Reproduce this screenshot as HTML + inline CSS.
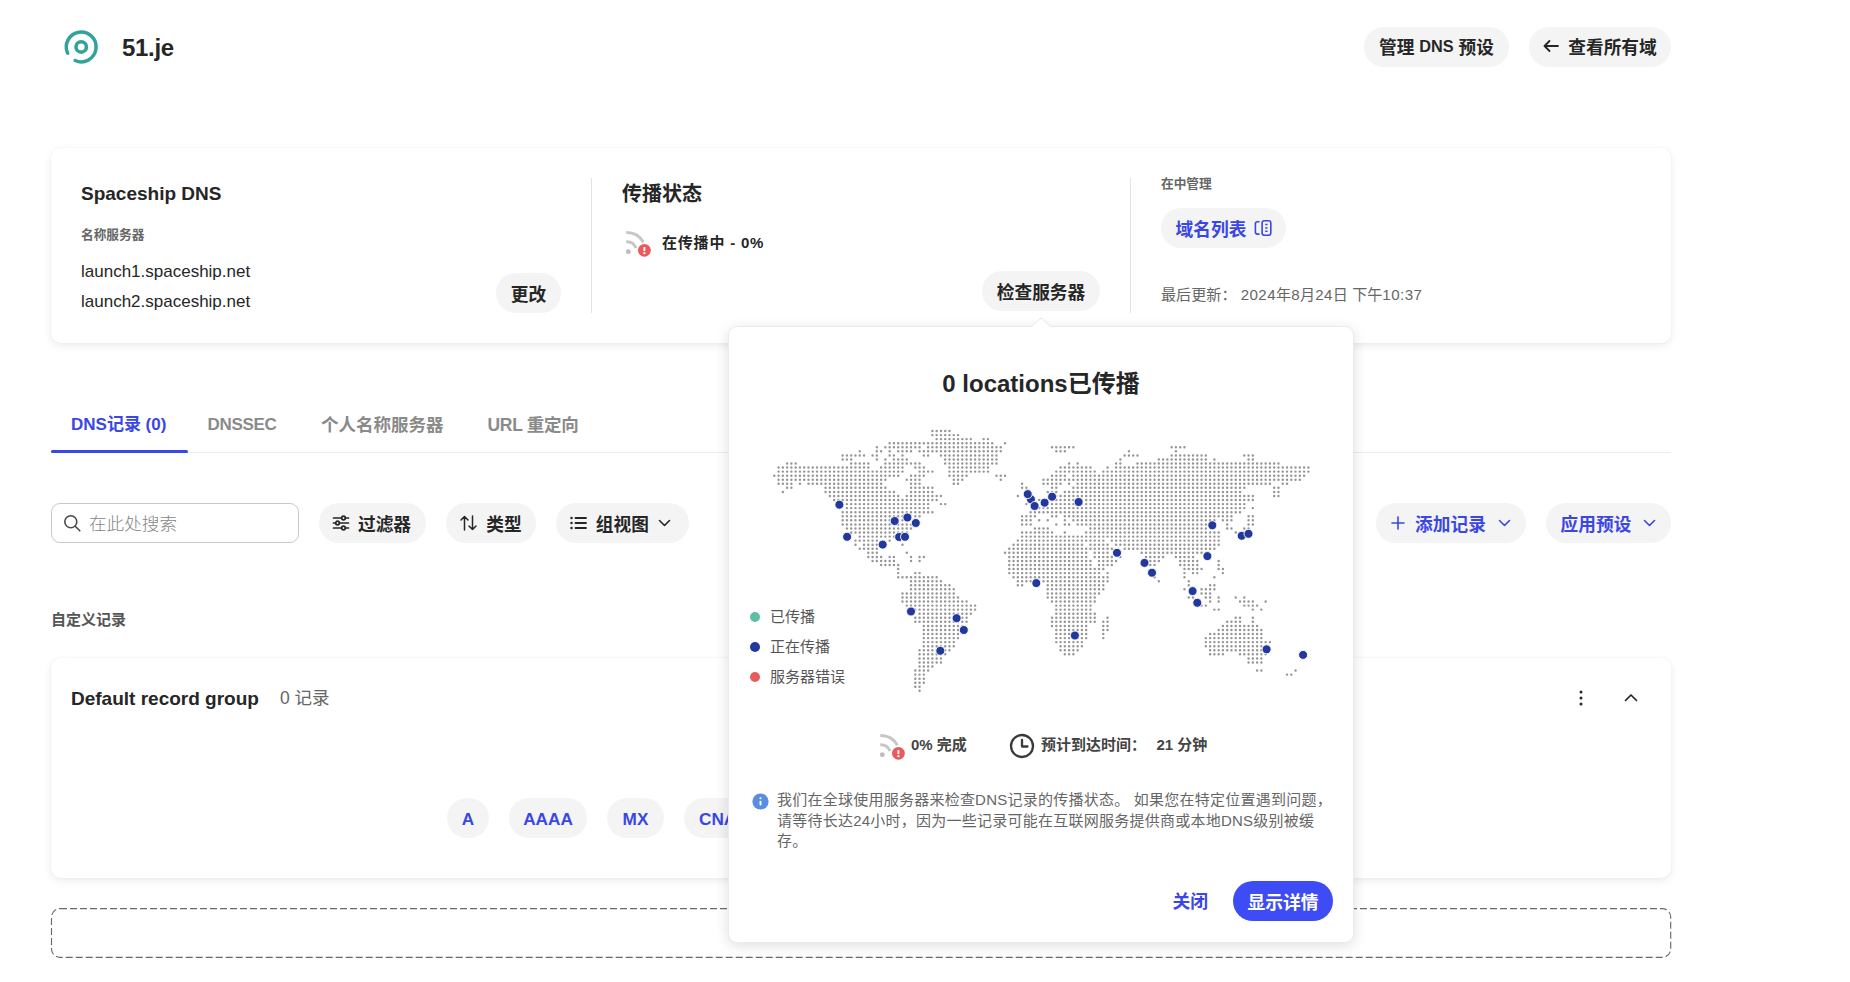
<!DOCTYPE html>
<html lang="zh-CN">
<head>
<meta charset="utf-8">
<title>51.je - DNS</title>
<style>
*{box-sizing:border-box;margin:0;padding:0}
html,body{width:1850px;height:982px;overflow:hidden;background:#fff}
body{position:relative;font-family:"Liberation Sans","Noto Sans CJK SC",sans-serif;color:#262626;-webkit-font-smoothing:antialiased}
.abs{position:absolute;white-space:nowrap}
.b{font-weight:700}
.pill{position:absolute;background:#f4f4f4;border-radius:20px;height:40px;display:flex;align-items:center;justify-content:center;font-weight:700;font-size:17.7px;white-space:nowrap;color:#262626;padding-bottom:1px}
.pill.blue{color:#3a47e4}
.card{position:absolute;background:#fff;border-radius:10px;box-shadow:0 3px 8px rgba(0,0,0,.075),0 0 3px rgba(0,0,0,.045)}
.vline{position:absolute;width:1px;background:#e3e3e3}
.grey{color:#666}
.ls{letter-spacing:.45px}
svg{position:absolute;overflow:visible}
</style>
</head>
<body>

<!-- header -->
<svg style="left:63px;top:30px" width="36" height="36" viewBox="0 0 36 36" fill="none" stroke="#2fa49a" stroke-width="3.5" stroke-linecap="round">
  <path d="M4.70 23.20A14.9 14.9 0 1 1 12.14 30.51"/>
  <circle cx="18.2" cy="16.9" r="5.2" stroke-width="3.6"/>
</svg>
<div class="abs b" style="left:122px;top:33px;font-size:24px;line-height:30px;letter-spacing:-.3px">51.je</div>
<div class="pill" style="left:1364px;top:26.7px;width:145px">管理&nbsp;<span style="font-size:16.3px">DNS</span>&nbsp;预设</div>
<div class="pill" style="left:1529px;top:26.7px;width:142px"><svg style="position:static;margin-right:9px" width="16" height="14" viewBox="0 0 16 14" fill="none" stroke="#262626" stroke-width="1.8" stroke-linecap="round" stroke-linejoin="round"><path d="M15 7H1.5M6.5 2L1.5 7l5 5"/></svg>查看所有域</div>

<!-- card 1 -->
<div class="card" style="left:51px;top:148px;width:1620px;height:195px"></div>
<div class="abs b" style="left:81px;top:181.5px;font-size:19px;line-height:24px">Spaceship DNS</div>
<div class="abs b grey" style="left:81px;top:226.8px;font-size:12.7px;line-height:16px">名称服务器</div>
<div class="abs" style="left:81px;top:260.5px;font-size:17px;line-height:22px">launch1.spaceship.net</div>
<div class="abs" style="left:81px;top:290.5px;font-size:17px;line-height:22px">launch2.spaceship.net</div>
<div class="pill" style="left:496px;top:273px;width:65px">更改</div>
<div class="vline" style="left:591px;top:178px;height:135px"></div>

<div class="abs b" style="left:622px;top:181px;font-size:20px;line-height:26px">传播状态</div>
<svg style="left:615px;top:224px" width="50" height="38" viewBox="0 0 50 38" fill="none"><g stroke="#c6c6c6" stroke-width="2.9"><path d="M11.26 8.50A19.4 19.4 0 0 1 28.40 18.20"/><path d="M11.24 17.71A10.2 10.2 0 0 1 21.06 24.08"/></g><circle cx="13.3" cy="27.7" r="2.4" fill="#bcbcbc"/><circle cx="29.4" cy="26.3" r="7.6" fill="#fff"/><circle cx="29.4" cy="26.3" r="6.4" fill="#ec595d"/><path d="M29.4 23.1v4" stroke="#fff" stroke-width="1.9"/><rect x="28.45" y="28.2" width="1.9" height="1.9" fill="#fff"/></svg>
<div class="abs b" style="left:662px;top:233px;font-size:15px;line-height:20px;letter-spacing:.8px">在传播中 - 0%</div>
<div class="pill" style="left:982px;top:271px;width:118px">检查服务器</div>
<div class="vline" style="left:1130px;top:178px;height:135px"></div>

<div class="abs b grey" style="left:1161px;top:176px;font-size:12.7px;line-height:16px">在中管理</div>
<div class="pill blue" style="left:1161px;top:208px;width:125px;justify-content:flex-start;padding-left:14.6px">域名列表</div>
<svg style="left:1254px;top:219px" width="18" height="18" viewBox="0 0 18 18" fill="none" stroke="#3a47e4" stroke-width="1.6" stroke-linecap="round" stroke-linejoin="round"><path d="M5 2.8H3.4a2 2 0 0 0-2 2v8.3a2 2 0 0 0 2 2H5"/><rect x="8.1" y="1.7" width="8.7" height="14.6" rx="2.2"/><path d="M11.2 5.6h2.4M11.2 9h2.4M11.2 12.3h2.4" stroke-width="1.5" stroke-linecap="butt"/></svg>
<div class="abs grey" style="left:1161px;top:284.8px;font-size:15.1px;line-height:20px">最后更新： <span class="ls">2024</span>年<span class="ls">8</span>月<span class="ls">24</span>日 下午<span class="ls">10:37</span></div>

<!-- tabs -->
<div class="abs b" style="left:71px;top:413px;font-size:17px;line-height:24px;color:#3a47e4">DNS记录 (0)</div>
<div class="abs b" style="left:207.5px;top:413px;font-size:17px;line-height:24px;color:#8a8a8a;letter-spacing:-.3px">DNSSEC</div>
<div class="abs b" style="left:321px;top:413px;font-size:17.5px;line-height:24px;color:#8a8a8a">个人名称服务器</div>
<div class="abs b" style="left:487.5px;top:413px;font-size:17.5px;line-height:24px;color:#8a8a8a;letter-spacing:-.3px">URL 重定向</div>
<div class="abs" style="left:51px;top:452px;width:1620px;height:1px;background:#ececec"></div>
<div class="abs" style="left:51px;top:450px;width:137px;height:3px;background:#3a47e4;border-radius:2px"></div>

<!-- toolbar -->
<div class="abs" style="left:51px;top:503px;width:248px;height:40px;border:1px solid #c9c9c9;border-radius:9px"></div>
<svg style="left:63px;top:514px" width="19" height="19" viewBox="0 0 19 19" fill="none" stroke="#4a4a4a" stroke-width="1.6" stroke-linecap="round"><circle cx="7.8" cy="7.8" r="6"/><path d="M12.3 12.3l4.5 4.5"/></svg>
<div class="abs" style="left:89px;top:512px;font-size:17.6px;line-height:24px;color:#858585;font-weight:300">在此处搜索</div>

<div class="pill" style="left:319px;top:503px;width:107px;padding-right:2px"><svg style="position:static;margin-right:8px" width="18" height="16" viewBox="0 0 18 16" fill="none" stroke="#262626" stroke-width="1.7" stroke-linecap="round"><path d="M1.5 3h8M13.5 3h3M1.5 8h2M7.5 8h9M1.5 13h8M13.5 13h3"/><circle cx="11.5" cy="3" r="1.8"/><circle cx="5.5" cy="8" r="1.8"/><circle cx="11.5" cy="13" r="1.8"/></svg>过滤器</div>
<div class="pill" style="left:446px;top:503px;width:90px"><svg style="position:static;margin-right:9px" width="17" height="16" viewBox="0 0 17 16" fill="none" stroke="#262626" stroke-width="1.5" stroke-linecap="round" stroke-linejoin="round"><path d="M4.5 15V1.5M1 5l3.5-3.5L8 5M12.5 1v13.5M9 11l3.5 3.5L16 11"/></svg>类型</div>
<div class="pill" style="left:556px;top:503px;width:133px;padding-right:3.8px"><svg style="position:static;margin-right:9px" width="17" height="14" viewBox="0 0 17 14" fill="none" stroke="#262626" stroke-width="1.8" stroke-linecap="round"><path d="M5.5 2h10.5M5.5 7h10.5M5.5 12h10.5"/><g fill="#262626" stroke="none"><circle cx="1.5" cy="2" r="1.25"/><circle cx="1.5" cy="7" r="1.25"/><circle cx="1.5" cy="12" r="1.25"/></g></svg>组视图<svg style="position:static;margin-left:9.6px" width="13" height="8" viewBox="0 0 13 8" fill="none" stroke="#262626" stroke-width="1.6" stroke-linecap="round" stroke-linejoin="round"><path d="M1.5 1.5l5 5 5-5"/></svg></div>

<div class="pill blue" style="left:1376px;top:503px;width:150px"><svg style="position:static;margin-right:10px" width="14" height="14" viewBox="0 0 14 14" fill="none" stroke="#3a47e4" stroke-width="1.6" stroke-linecap="round"><path d="M7 1v12M1 7h12"/></svg>添加记录<svg style="position:static;margin-left:12px" width="13" height="8" viewBox="0 0 13 8" fill="none" stroke="#3a47e4" stroke-width="1.6" stroke-linecap="round" stroke-linejoin="round"><path d="M1.5 1.5l5 5 5-5"/></svg></div>
<div class="pill blue" style="left:1546px;top:503px;width:125px">应用预设<svg style="position:static;margin-left:12px" width="13" height="8" viewBox="0 0 13 8" fill="none" stroke="#3a47e4" stroke-width="1.6" stroke-linecap="round" stroke-linejoin="round"><path d="M1.5 1.5l5 5 5-5"/></svg></div>

<div class="abs b" style="left:51px;top:610px;font-size:15px;line-height:20px;color:#555">自定义记录</div>

<!-- card 2 -->
<div class="card" style="left:51px;top:658px;width:1620px;height:220px"></div>
<div class="abs b" style="left:71px;top:687px;font-size:19px;line-height:24px">Default record group</div>
<div class="abs grey" style="left:280px;top:686px;font-size:17.5px;line-height:24px">0 记录</div>
<svg style="left:1578px;top:689px" width="6" height="18" viewBox="0 0 6 18" fill="#262626"><circle cx="3" cy="3" r="1.5"/><circle cx="3" cy="9" r="1.5"/><circle cx="3" cy="15" r="1.5"/></svg>
<svg style="left:1624px;top:693px" width="14" height="9" viewBox="0 0 14 9" fill="none" stroke="#262626" stroke-width="1.7" stroke-linecap="round" stroke-linejoin="round"><path d="M1.5 7.5l5.5-5.5 5.5 5.5"/></svg>
<div class="pill blue" style="left:447px;top:798px;width:42px;padding:2px 0 0;font-size:17.2px">A</div>
<div class="pill blue" style="left:509px;top:798px;width:78px;padding:2px 0 0;font-size:17.2px">AAAA</div>
<div class="pill blue" style="left:607px;top:798px;width:57px;padding:2px 0 0;font-size:17.2px">MX</div>
<div class="pill blue" style="left:684px;top:798px;width:100px;justify-content:flex-start;padding:2px 0 0 15px;font-size:17.2px">CNAME</div>

<!-- dashed box -->
<svg style="left:0;top:0" width="1850" height="982"><rect x="51.5" y="908.6" width="1619.2" height="48.8" rx="8.5" fill="none" stroke="#6a6a6a" stroke-width="1.15" stroke-dasharray="7 3"/></svg>

<!-- popover -->
<div class="abs" style="left:728px;top:326px;width:626px;height:617px;background:#fff;border-radius:9px;border:1px solid #ebebeb;box-shadow:0 3px 14px rgba(0,0,0,.13)"></div>
<svg style="left:1030px;top:317px" width="22" height="11" viewBox="0 0 22 11"><path d="M0 10.5L11 0.5L22 10.5z" fill="#fff"/><path d="M1 10L11 1L21 10" fill="none" stroke="#e6e6e6" stroke-width="1"/></svg>
<div class="abs b" style="left:729px;top:367px;width:624px;text-align:center;font-size:24px;line-height:34px">0 locations已传播</div>

<svg style="left:0;top:0" width="1850" height="982" viewBox="0 0 1850 982"><path d="M932.39 431.0h17.29M932.39 435.1h25.84M936.66 439.1h34.38M983.66 439.1h4.47M889.66 443.2h102.74M1005.02 443.2h0.20M876.84 447.2h0.20M885.39 447.2h34.38M928.11 447.2h72.83M1052.02 447.2h21.56M1171.65 447.2h13.02M859.75 451.3h0.20M876.84 451.3h4.47M889.66 451.3h0.20M898.21 451.3h13.02M919.57 451.3h81.38M1056.29 451.3h8.75M1128.93 451.3h0.20M1175.92 451.3h0.20M842.66 455.4h21.56M872.57 455.4h4.47M889.66 455.4h4.47M902.48 455.4h0.20M923.84 455.4h4.47M940.93 455.4h55.74M1124.65 455.4h13.02M1171.65 455.4h34.38M1244.29 455.4h8.75M842.66 459.4h8.75M876.84 459.4h0.20M885.39 459.4h0.20M893.93 459.4h13.02M945.20 459.4h51.47M1120.38 459.4h0.20M1158.83 459.4h47.20M1214.38 459.4h0.20M1248.56 459.4h4.47M787.12 463.5h8.75M851.21 463.5h17.29M885.39 463.5h34.38M945.20 463.5h51.47M1069.11 463.5h0.20M1077.65 463.5h0.20M1116.11 463.5h4.47M1137.47 463.5h141.20M778.57 467.5h89.92M881.12 467.5h21.56M915.30 467.5h8.75M949.48 467.5h38.65M1060.56 467.5h30.11M1107.56 467.5h0.20M1116.11 467.5h192.47M778.57 471.6h124.11M919.57 471.6h13.02M949.48 471.6h38.65M1056.29 471.6h38.65M1103.29 471.6h205.28M774.30 475.7h124.11M911.02 475.7h13.02M949.48 475.7h17.29M996.48 475.7h8.75M1052.02 475.7h13.02M1073.38 475.7h230.92M778.57 479.7h107.01M906.75 479.7h13.02M953.75 479.7h8.75M1000.75 479.7h0.20M1043.47 479.7h256.56M778.57 483.8h13.02M799.94 483.8h0.20M808.48 483.8h72.83M911.02 483.8h8.75M953.75 483.8h4.47M1022.11 483.8h0.20M1043.47 483.8h17.29M1069.11 483.8h0.20M1077.65 483.8h192.47M1282.74 483.8h4.47M787.12 487.8h4.47M825.57 487.8h60.02M911.02 487.8h21.56M1022.11 487.8h4.47M1052.02 487.8h4.47M1073.38 487.8h171.10M1274.19 487.8h4.47M782.85 491.9h0.20M825.57 491.9h68.56M911.02 491.9h21.56M1047.75 491.9h8.75M1064.84 491.9h175.38M1274.19 491.9h4.47M829.84 496.0h68.56M906.75 496.0h34.38M1017.84 496.0h0.20M1056.29 496.0h196.74M1274.19 496.0h4.47M834.12 500.0h102.74M1039.20 500.0h213.83M838.39 504.1h89.92M940.93 504.1h4.47M1026.38 504.1h0.20M1052.02 504.1h192.47M846.93 508.1h81.38M1039.20 508.1h205.28M1252.83 508.1h0.20M842.66 512.2h89.92M1030.66 512.2h209.56M842.66 516.3h77.11M1022.11 516.3h13.02M1052.02 516.3h4.47M1064.84 516.3h166.83M1248.56 516.3h4.47M842.66 520.3h60.02M1022.11 520.3h8.75M1039.20 520.3h0.20M1047.75 520.3h0.20M1064.84 520.3h0.20M1073.38 520.3h141.20M1222.92 520.3h8.75M1248.56 520.3h4.47M842.66 524.4h68.56M1022.11 524.4h8.75M1056.29 524.4h0.20M1064.84 524.4h4.47M1077.65 524.4h128.38M1227.20 524.4h0.20M1248.56 524.4h4.47M846.93 528.4h64.29M1034.93 528.4h13.02M1090.47 528.4h115.56M1227.20 528.4h4.47M1244.29 528.4h4.47M851.21 532.5h55.74M1022.11 532.5h30.11M1064.84 532.5h0.20M1086.20 532.5h132.65M1235.74 532.5h0.20M859.75 536.6h34.38M1022.11 536.6h196.74M855.48 540.6h21.56M889.66 540.6h0.20M1017.84 540.6h85.65M1111.84 540.6h107.02M855.48 544.7h0.20M864.02 544.7h13.02M902.48 544.7h0.20M1013.57 544.7h68.56M1090.47 544.7h17.29M1116.11 544.7h102.74M859.75 548.7h17.29M1009.29 548.7h102.74M1124.65 548.7h89.92M868.30 552.8h8.75M906.75 552.8h0.20M1005.02 552.8h81.38M1094.74 552.8h13.02M1141.74 552.8h60.02M868.30 556.9h13.02M889.66 556.9h4.47M911.02 556.9h0.20M919.57 556.9h4.47M1009.29 556.9h77.11M1094.74 556.9h17.29M1120.38 556.9h0.20M1146.02 556.9h17.29M1175.92 556.9h17.29M872.57 560.9h21.56M911.02 560.9h0.20M919.57 560.9h0.20M1009.29 560.9h81.38M1099.02 560.9h17.29M1150.29 560.9h8.75M1180.20 560.9h17.29M1218.65 560.9h0.20M881.12 565.0h17.29M1009.29 565.0h81.38M1099.02 565.0h13.02M1150.29 565.0h4.47M1180.20 565.0h17.29M1218.65 565.0h0.20M898.21 569.0h0.20M1009.29 569.0h94.20M1184.47 569.0h17.29M1218.65 569.0h4.47M898.21 573.1h0.20M915.30 573.1h4.47M1009.29 573.1h89.92M1107.56 573.1h0.20M1184.47 573.1h0.20M1193.01 573.1h4.47M1222.92 573.1h0.20M898.21 577.2h38.65M1013.57 577.2h94.20M1154.56 577.2h0.20M1184.47 577.2h0.20M1214.38 577.2h0.20M911.02 581.2h30.11M1017.84 581.2h89.92M1158.83 581.2h0.20M1188.74 581.2h0.20M911.02 585.3h38.65M1017.84 585.3h4.47M1047.75 585.3h55.74M1188.74 585.3h0.20M1210.11 585.3h4.47M911.02 589.3h42.93M1047.75 589.3h55.74M1184.47 589.3h0.20M1201.56 589.3h13.02M902.48 593.4h51.47M1047.75 593.4h51.47M1201.56 593.4h8.75M902.48 597.5h55.74M1047.75 597.5h47.20M1188.74 597.5h4.47M1205.83 597.5h4.47M1218.65 597.5h0.20M1235.74 597.5h0.20M1244.29 597.5h0.20M902.48 601.5h64.29M1052.02 601.5h42.93M1210.11 601.5h0.20M1218.65 601.5h0.20M1240.01 601.5h13.02M1265.65 601.5h0.20M906.75 605.6h68.56M1056.29 605.6h34.38M1201.56 605.6h4.47M1244.29 605.6h13.02M911.02 609.6h64.29M1056.29 609.6h34.38M1214.38 609.6h4.47M1252.83 609.6h0.20M1261.38 609.6h0.20M919.57 613.7h51.47M1056.29 613.7h38.65M915.30 617.8h51.47M1052.02 617.8h42.93M1107.56 617.8h0.20M1235.74 617.8h4.47M1252.83 617.8h0.20M915.30 621.8h51.47M1052.02 621.8h42.93M1103.29 621.8h4.47M1227.20 621.8h13.02M1252.83 621.8h0.20M923.84 625.9h38.65M1052.02 625.9h34.38M1103.29 625.9h4.47M1222.92 625.9h34.38M923.84 629.9h38.65M1056.29 629.9h30.11M1103.29 629.9h4.47M1218.65 629.9h42.93M923.84 634.0h34.38M1056.29 634.0h30.11M1103.29 634.0h0.20M1210.11 634.0h51.47M923.84 638.1h34.38M1056.29 638.1h30.11M1103.29 638.1h0.20M1205.83 638.1h55.74M923.84 642.1h30.11M1056.29 642.1h25.84M1205.83 642.1h64.29M923.84 646.2h30.11M1060.56 646.2h21.56M1205.83 646.2h60.02M919.57 650.2h30.11M1060.56 650.2h17.29M1210.11 650.2h55.74M919.57 654.3h25.84M1064.84 654.3h8.75M1210.11 654.3h13.02M1240.01 654.3h25.84M919.57 658.4h21.56M1248.56 658.4h13.02M919.57 662.4h21.56M1248.56 662.4h13.02M919.57 666.5h13.02M915.30 670.5h13.02M1257.10 670.5h4.47M1295.56 670.5h0.20M915.30 674.6h8.75M1287.01 674.6h4.47M915.30 678.7h8.75M915.30 682.7h8.75M915.30 686.8h4.47M919.57 690.8h0.20" fill="none" stroke="#969696" stroke-width="2.45" stroke-linecap="round" stroke-dasharray="0 4.2726"/><circle cx="839.4" cy="504.7" r="4.5" fill="#22389c" stroke="#fff" stroke-width="0.9"/><circle cx="907.4" cy="517.5" r="4.5" fill="#22389c" stroke="#fff" stroke-width="0.9"/><circle cx="894.7" cy="521.0" r="4.5" fill="#22389c" stroke="#fff" stroke-width="0.9"/><circle cx="915.8" cy="523.0" r="4.5" fill="#22389c" stroke="#fff" stroke-width="0.9"/><circle cx="847.1" cy="536.8" r="4.5" fill="#22389c" stroke="#fff" stroke-width="0.9"/><circle cx="899.1" cy="537.0" r="4.5" fill="#22389c" stroke="#fff" stroke-width="0.9"/><circle cx="905.0" cy="536.8" r="4.5" fill="#22389c" stroke="#fff" stroke-width="0.9"/><circle cx="882.7" cy="544.6" r="4.5" fill="#22389c" stroke="#fff" stroke-width="0.9"/><circle cx="911.0" cy="611.5" r="4.5" fill="#22389c" stroke="#fff" stroke-width="0.9"/><circle cx="956.6" cy="618.2" r="4.5" fill="#22389c" stroke="#fff" stroke-width="0.9"/><circle cx="963.8" cy="630.0" r="4.5" fill="#22389c" stroke="#fff" stroke-width="0.9"/><circle cx="940.3" cy="650.8" r="4.5" fill="#22389c" stroke="#fff" stroke-width="0.9"/><circle cx="1030.9" cy="499.3" r="4.5" fill="#22389c" stroke="#fff" stroke-width="0.9"/><circle cx="1027.7" cy="494.1" r="4.5" fill="#22389c" stroke="#fff" stroke-width="0.9"/><circle cx="1034.6" cy="506.0" r="4.5" fill="#22389c" stroke="#fff" stroke-width="0.9"/><circle cx="1044.6" cy="502.7" r="4.5" fill="#22389c" stroke="#fff" stroke-width="0.9"/><circle cx="1052.1" cy="496.7" r="4.5" fill="#22389c" stroke="#fff" stroke-width="0.9"/><circle cx="1078.6" cy="502.0" r="4.5" fill="#22389c" stroke="#fff" stroke-width="0.9"/><circle cx="1036.3" cy="583.1" r="4.5" fill="#22389c" stroke="#fff" stroke-width="0.9"/><circle cx="1074.9" cy="635.5" r="4.5" fill="#22389c" stroke="#fff" stroke-width="0.9"/><circle cx="1117.0" cy="552.8" r="4.5" fill="#22389c" stroke="#fff" stroke-width="0.9"/><circle cx="1144.5" cy="562.9" r="4.5" fill="#22389c" stroke="#fff" stroke-width="0.9"/><circle cx="1152.0" cy="572.7" r="4.5" fill="#22389c" stroke="#fff" stroke-width="0.9"/><circle cx="1212.3" cy="525.3" r="4.5" fill="#22389c" stroke="#fff" stroke-width="0.9"/><circle cx="1207.4" cy="556.1" r="4.5" fill="#22389c" stroke="#fff" stroke-width="0.9"/><circle cx="1241.7" cy="535.8" r="4.5" fill="#22389c" stroke="#fff" stroke-width="0.9"/><circle cx="1248.5" cy="533.8" r="4.5" fill="#22389c" stroke="#fff" stroke-width="0.9"/><circle cx="1192.6" cy="591.1" r="4.5" fill="#22389c" stroke="#fff" stroke-width="0.9"/><circle cx="1197.3" cy="602.8" r="4.5" fill="#22389c" stroke="#fff" stroke-width="0.9"/><circle cx="1266.6" cy="649.3" r="4.5" fill="#22389c" stroke="#fff" stroke-width="0.9"/><circle cx="1303.1" cy="654.9" r="4.5" fill="#22389c" stroke="#fff" stroke-width="0.9"/></svg>

<div class="abs" style="left:750px;top:612px;width:10px;height:10px;border-radius:50%;background:#5bbfa4"></div>
<div class="abs" style="left:750px;top:642px;width:10px;height:10px;border-radius:50%;background:#22389c"></div>
<div class="abs" style="left:750px;top:672px;width:10px;height:10px;border-radius:50%;background:#e95a5f"></div>
<div class="abs" style="left:770px;top:607.3px;font-size:15px;line-height:20px;color:#555">已传播</div>
<div class="abs" style="left:770px;top:637.3px;font-size:15px;line-height:20px;color:#555">正在传播</div>
<div class="abs" style="left:770px;top:667.3px;font-size:15px;line-height:20px;color:#555">服务器错误</div>

<svg style="left:869px;top:727px" width="50" height="38" viewBox="0 0 50 38" fill="none"><g stroke="#c6c6c6" stroke-width="2.9"><path d="M11.26 8.50A19.4 19.4 0 0 1 28.40 18.20"/><path d="M11.24 17.71A10.2 10.2 0 0 1 21.06 24.08"/></g><circle cx="13.3" cy="27.7" r="2.4" fill="#bcbcbc"/><circle cx="29.4" cy="26.3" r="7.6" fill="#fff"/><circle cx="29.4" cy="26.3" r="6.4" fill="#ec595d"/><path d="M29.4 23.1v4" stroke="#fff" stroke-width="1.9"/><rect x="28.45" y="28.2" width="1.9" height="1.9" fill="#fff"/></svg>
<div class="abs b" style="left:911px;top:735px;font-size:15px;line-height:20px;color:#444">0% 完成</div>
<svg style="left:1009px;top:733px" width="26" height="26" viewBox="0 0 26 26" fill="none" stroke="#3a3a3a" stroke-width="2.3" stroke-linecap="round" stroke-linejoin="round"><circle cx="13" cy="13" r="11"/><path d="M13 7v6.5h5.5"/></svg>
<div class="abs b" style="left:1041px;top:735px;font-size:15px;line-height:20px;color:#444">预计到达时间：<span style="margin-left:10.5px">21 分钟</span></div>

<svg style="left:751.5px;top:792.5px" width="17" height="17" viewBox="0 0 17 17"><circle cx="8.5" cy="8.5" r="8.1" fill="#5a8fe0"/><circle cx="8.5" cy="5.3" r="1.05" fill="#fff"/><path d="M8.5 8.6v3" stroke="#fff" stroke-width="1.9" stroke-linecap="round"/></svg>
<div class="abs" style="left:777px;top:790.3px;font-size:15px;line-height:20.2px;color:#666;letter-spacing:.24px">我们在全球使用服务器来检查DNS记录的传播状态。 如果您在特定位置遇到问题，<br>请等待长达24小时，因为一些记录可能在互联网服务提供商或本地DNS级别被缓<br>存。</div>

<div class="abs b" style="left:1172.5px;top:889.5px;font-size:17.8px;line-height:24px;color:#3a47e4">关闭</div>
<div class="pill" style="left:1233px;top:881px;width:100px;background:#3d4cf5;color:#fff;font-size:17.8px">显示详情</div>

</body>
</html>
